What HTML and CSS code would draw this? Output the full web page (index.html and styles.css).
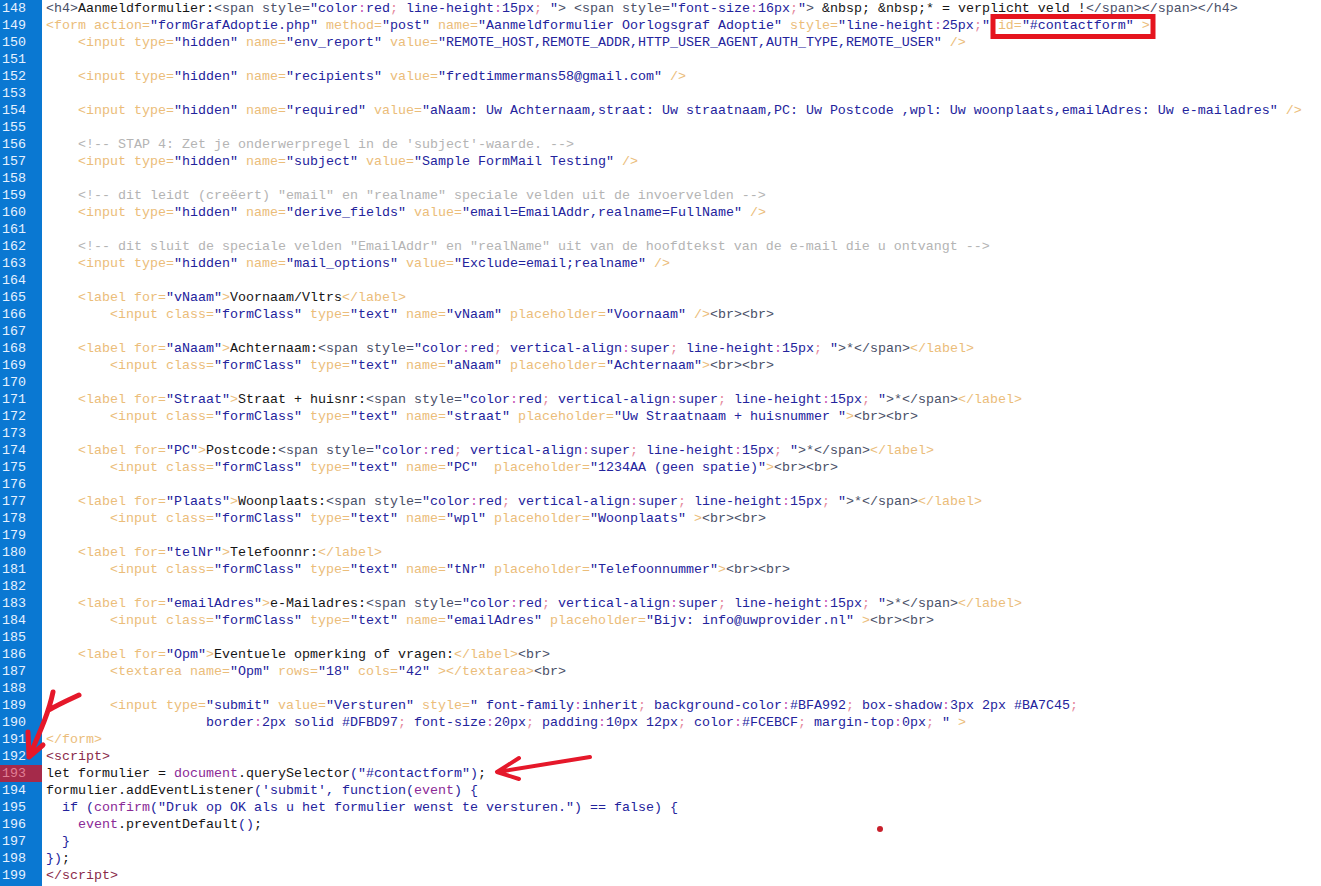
FILE: index.html
```html
<!DOCTYPE html>
<html lang="nl">
<head>
<meta charset="utf-8">
<title>Code editor</title>
<link rel="stylesheet" href="styles.css">
</head>
<body>
<main class="editor">
<div class="gutter">
<div>148</div><div>149</div><div>150</div><div>151</div><div>152</div><div>153</div><div>154</div><div>155</div><div>156</div><div>157</div><div>158</div><div>159</div><div>160</div><div>161</div><div>162</div><div>163</div><div>164</div><div>165</div><div>166</div><div>167</div><div>168</div><div>169</div><div>170</div><div>171</div><div>172</div><div>173</div><div>174</div><div>175</div><div>176</div><div>177</div><div>178</div><div>179</div><div>180</div><div>181</div><div>182</div><div>183</div><div>184</div><div>185</div><div>186</div><div>187</div><div>188</div><div>189</div><div>190</div><div>191</div><div>192</div><div class="breakpoint">193</div><div>194</div><div>195</div><div>196</div><div>197</div><div>198</div><div>199</div>
</div>
<div class="code">
<div class="ln"><span class="g">&lt;h4&gt;</span>Aanmeldformulier:<span class="g">&lt;span style=</span><span class="b">"color<span class="p">:</span>red<span class="s">;</span> line-height<span class="p">:</span>15px<span class="s">;</span> "</span><span class="g">&gt; &lt;span style=</span><span class="b">"font-size<span class="p">:</span>16px<span class="s">;</span>"</span><span class="g">&gt;</span> &amp;nbsp; &amp;nbsp;* = verplicht veld !<span class="g">&lt;/span&gt;&lt;/span&gt;&lt;/h4&gt;</span></div>
<div class="ln"><span class="o">&lt;form action=</span><span class="b">"formGrafAdoptie.php"</span> <span class="o">method=</span><span class="b">"post"</span> <span class="o">name=</span><span class="b">"Aanmeldformulier Oorlogsgraf Adoptie"</span> <span class="o">style=</span><span class="b">"line-height<span class="p">:</span>25px<span class="s">;</span>"</span> <span class="o">id=</span><span class="b">"#contactform"</span> <span class="o">&gt;</span></div>
<div class="ln i1"><span class="o">&lt;input type=</span><span class="b">"hidden"</span> <span class="o">name=</span><span class="b">"env_report"</span> <span class="o">value=</span><span class="b">"REMOTE_HOST,REMOTE_ADDR,HTTP_USER_AGENT,AUTH_TYPE,REMOTE_USER"</span> <span class="o">/&gt;</span></div>
<div class="ln"></div>
<div class="ln i1"><span class="o">&lt;input type=</span><span class="b">"hidden"</span> <span class="o">name=</span><span class="b">"recipients"</span> <span class="o">value=</span><span class="b">"fredtimmermans58@gmail.com"</span> <span class="o">/&gt;</span></div>
<div class="ln"></div>
<div class="ln i1"><span class="o">&lt;input type=</span><span class="b">"hidden"</span> <span class="o">name=</span><span class="b">"required"</span> <span class="o">value=</span><span class="b">"aNaam: Uw Achternaam,straat: Uw straatnaam,PC: Uw Postcode ,wpl: Uw woonplaats,emailAdres: Uw e-mailadres"</span> <span class="o">/&gt;</span></div>
<div class="ln"></div>
<div class="ln i1"><span class="c">&lt;!-- STAP 4: Zet je onderwerpregel in de 'subject'-waarde. --&gt;</span></div>
<div class="ln i1"><span class="o">&lt;input type=</span><span class="b">"hidden"</span> <span class="o">name=</span><span class="b">"subject"</span> <span class="o">value=</span><span class="b">"Sample FormMail Testing"</span> <span class="o">/&gt;</span></div>
<div class="ln"></div>
<div class="ln i1"><span class="c">&lt;!-- dit leidt (creëert) "email" en "realname" speciale velden uit de invoervelden --&gt;</span></div>
<div class="ln i1"><span class="o">&lt;input type=</span><span class="b">"hidden"</span> <span class="o">name=</span><span class="b">"derive_fields"</span> <span class="o">value=</span><span class="b">"email=EmailAddr,realname=FullName"</span> <span class="o">/&gt;</span></div>
<div class="ln"></div>
<div class="ln i1"><span class="c">&lt;!-- dit sluit de speciale velden "EmailAddr" en "realName" uit van de hoofdtekst van de e-mail die u ontvangt --&gt;</span></div>
<div class="ln i1"><span class="o">&lt;input type=</span><span class="b">"hidden"</span> <span class="o">name=</span><span class="b">"mail_options"</span> <span class="o">value=</span><span class="b">"Exclude=email;realname"</span> <span class="o">/&gt;</span></div>
<div class="ln"></div>
<div class="ln i1"><span class="o">&lt;label for=</span><span class="b">"vNaam"</span><span class="o">&gt;</span>Voornaam/Vltrs<span class="o">&lt;/label&gt;</span></div>
<div class="ln i2"><span class="o">&lt;input class=</span><span class="b">"formClass"</span> <span class="o">type=</span><span class="b">"text"</span> <span class="o">name=</span><span class="b">"vNaam"</span> <span class="o">placeholder=</span><span class="b">"Voornaam"</span> <span class="o">/&gt;</span><span class="g">&lt;br&gt;&lt;br&gt;</span></div>
<div class="ln"></div>
<div class="ln i1"><span class="o">&lt;label for=</span><span class="b">"aNaam"</span><span class="o">&gt;</span>Achternaam:<span class="g">&lt;span style=</span><span class="b">"color<span class="p">:</span>red<span class="s">;</span> vertical-align<span class="p">:</span>super<span class="s">;</span> line-height<span class="p">:</span>15px<span class="s">;</span> "</span><span class="g">&gt;*&lt;/span&gt;</span><span class="o">&lt;/label&gt;</span></div>
<div class="ln i2"><span class="o">&lt;input class=</span><span class="b">"formClass"</span> <span class="o">type=</span><span class="b">"text"</span> <span class="o">name=</span><span class="b">"aNaam"</span> <span class="o">placeholder=</span><span class="b">"Achternaam"</span><span class="o">&gt;</span><span class="g">&lt;br&gt;&lt;br&gt;</span></div>
<div class="ln"></div>
<div class="ln i1"><span class="o">&lt;label for=</span><span class="b">"Straat"</span><span class="o">&gt;</span>Straat + huisnr:<span class="g">&lt;span style=</span><span class="b">"color<span class="p">:</span>red<span class="s">;</span> vertical-align<span class="p">:</span>super<span class="s">;</span> line-height<span class="p">:</span>15px<span class="s">;</span> "</span><span class="g">&gt;*&lt;/span&gt;</span><span class="o">&lt;/label&gt;</span></div>
<div class="ln i2"><span class="o">&lt;input class=</span><span class="b">"formClass"</span> <span class="o">type=</span><span class="b">"text"</span> <span class="o">name=</span><span class="b">"straat"</span> <span class="o">placeholder=</span><span class="b">"Uw Straatnaam + huisnummer "</span><span class="o">&gt;</span><span class="g">&lt;br&gt;&lt;br&gt;</span></div>
<div class="ln"></div>
<div class="ln i1"><span class="o">&lt;label for=</span><span class="b">"PC"</span><span class="o">&gt;</span>Postcode:<span class="g">&lt;span style=</span><span class="b">"color<span class="p">:</span>red<span class="s">;</span> vertical-align<span class="p">:</span>super<span class="s">;</span> line-height<span class="p">:</span>15px<span class="s">;</span> "</span><span class="g">&gt;*&lt;/span&gt;</span><span class="o">&lt;/label&gt;</span></div>
<div class="ln i2"><span class="o">&lt;input class=</span><span class="b">"formClass"</span> <span class="o">type=</span><span class="b">"text"</span> <span class="o">name=</span><span class="b">"PC"</span>  <span class="o">placeholder=</span><span class="b">"1234AA (geen spatie)"</span><span class="o">&gt;</span><span class="g">&lt;br&gt;&lt;br&gt;</span></div>
<div class="ln"></div>
<div class="ln i1"><span class="o">&lt;label for=</span><span class="b">"Plaats"</span><span class="o">&gt;</span>Woonplaats:<span class="g">&lt;span style=</span><span class="b">"color<span class="p">:</span>red<span class="s">;</span> vertical-align<span class="p">:</span>super<span class="s">;</span> line-height<span class="p">:</span>15px<span class="s">;</span> "</span><span class="g">&gt;*&lt;/span&gt;</span><span class="o">&lt;/label&gt;</span></div>
<div class="ln i2"><span class="o">&lt;input class=</span><span class="b">"formClass"</span> <span class="o">type=</span><span class="b">"text"</span> <span class="o">name=</span><span class="b">"wpl"</span> <span class="o">placeholder=</span><span class="b">"Woonplaats"</span> <span class="o">&gt;</span><span class="g">&lt;br&gt;&lt;br&gt;</span></div>
<div class="ln"></div>
<div class="ln i1"><span class="o">&lt;label for=</span><span class="b">"telNr"</span><span class="o">&gt;</span>Telefoonnr:<span class="o">&lt;/label&gt;</span></div>
<div class="ln i2"><span class="o">&lt;input class=</span><span class="b">"formClass"</span> <span class="o">type=</span><span class="b">"text"</span> <span class="o">name=</span><span class="b">"tNr"</span> <span class="o">placeholder=</span><span class="b">"Telefoonnummer"</span><span class="o">&gt;</span><span class="g">&lt;br&gt;&lt;br&gt;</span></div>
<div class="ln"></div>
<div class="ln i1"><span class="o">&lt;label for=</span><span class="b">"emailAdres"</span><span class="o">&gt;</span>e-Mailadres:<span class="g">&lt;span style=</span><span class="b">"color<span class="p">:</span>red<span class="s">;</span> vertical-align<span class="p">:</span>super<span class="s">;</span> line-height<span class="p">:</span>15px<span class="s">;</span> "</span><span class="g">&gt;*&lt;/span&gt;</span><span class="o">&lt;/label&gt;</span></div>
<div class="ln i2"><span class="o">&lt;input class=</span><span class="b">"formClass"</span> <span class="o">type=</span><span class="b">"text"</span> <span class="o">name=</span><span class="b">"emailAdres"</span> <span class="o">placeholder=</span><span class="b">"Bijv: info@uwprovider.nl"</span> <span class="o">&gt;</span><span class="g">&lt;br&gt;&lt;br&gt;</span></div>
<div class="ln"></div>
<div class="ln i1"><span class="o">&lt;label for=</span><span class="b">"Opm"</span><span class="o">&gt;</span>Eventuele opmerking of vragen:<span class="o">&lt;/label&gt;</span><span class="g">&lt;br&gt;</span></div>
<div class="ln i2"><span class="o">&lt;textarea name=</span><span class="b">"Opm"</span> <span class="o">rows=</span><span class="b">"18"</span> <span class="o">cols=</span><span class="b">"42"</span> <span class="o">&gt;&lt;/textarea&gt;</span><span class="g">&lt;br&gt;</span></div>
<div class="ln"></div>
<div class="ln i2"><span class="o">&lt;input type=</span><span class="b">"submit"</span> <span class="o">value=</span><span class="b">"Versturen"</span> <span class="o">style=</span><span class="b">" font-family<span class="p">:</span>inherit<span class="s">;</span> background-color<span class="p">:</span>#BFA992<span class="s">;</span> box-shadow<span class="p">:</span>3px 2px #BA7C45<span class="s">;</span></span></div>
<div class="ln i5"><span class="b">border<span class="p">:</span>2px solid #DFBD97<span class="s">;</span> font-size<span class="p">:</span>20px<span class="s">;</span> padding<span class="p">:</span>10px 12px<span class="s">;</span> color<span class="p">:</span>#FCEBCF<span class="s">;</span> margin-top<span class="p">:</span>0px<span class="s">;</span> "</span> <span class="o">&gt;</span></div>
<div class="ln"><span class="o">&lt;/form&gt;</span></div>
<div class="ln"><span class="m">&lt;script&gt;</span></div>
<div class="ln">let formulier = <span class="u">document</span>.querySelector<span class="b">("#contactform")</span>;</div>
<div class="ln">formulier.addEventListener<span class="b">('submit', function(</span><span class="u">event</span><span class="b">) {</span></div>
<div class="ln j1"><span class="b">if (</span><span class="u">confirm</span><span class="b">("Druk op OK als u het formulier wenst te versturen.") == false) {</span></div>
<div class="ln j2"><span class="u">event</span>.preventDefault<span class="b">()</span>;</div>
<div class="ln j1"><span class="b">}</span></div>
<div class="ln"><span class="b">})</span>;</div>
<div class="ln"><span class="m">&lt;/script&gt;</span></div>
</div>
<svg class="marks" width="1321" height="886" viewBox="0 0 1321 886" aria-hidden="true">
<rect class="box" x="993" y="16.5" width="160" height="20"/>
<path class="ink thick" d="M53 692 C49 712 40 732 29 757 M79 695 C66 701 57 705 49 710 M28 732 L29 757 L43 745"/>
<path class="ink" d="M590 757 L497 772 M519 758 L497 772 L519 779"/>
<circle class="dot" cx="880" cy="829" r="3"/>
</svg>
</main>
</body>
</html>
```
FILE: styles.css
```css
html, body {
  margin: 0;
  padding: 0;
  background: #fff;
}
.editor {
  position: relative;
  display: flex;
  width: 1321px;
  height: 886px;
  overflow: hidden;
  font-family: "Liberation Mono", "Courier New", monospace;
  font-size: 13.33px;
  line-height: 17px;
}
.gutter {
  flex: 0 0 42px;
  background: #0a78d2;
  color: #e6f1ff;
}
.gutter div {
  height: 17px;
  padding-left: 2px;
}
.gutter .breakpoint {
  background: #a52a4a;
  color: #e07f95;
}
.code {
  flex: 1;
  padding-left: 4px;
  color: #151515;
}
.ln {
  height: 17px;
  white-space: pre;
}
.i1 { padding-left: 32px; }
.i2 { padding-left: 64px; }
.i5 { padding-left: 160px; }
.j1 { padding-left: 16px; }
.j2 { padding-left: 32px; }
.o { color: #ebbd7a; }
.g { color: #4a5068; }
.b { color: #23239c; }
.p { color: #c855b5; }
.s { color: #e58aa0; }
.c { color: #b4b4b4; }
.u { color: #8a2a96; }
.m { color: #8a2a4a; }
.marks {
  position: absolute;
  left: 0;
  top: 0;
}
.box {
  fill: none;
  stroke: #e5141e;
  stroke-width: 5;
}
.ink {
  fill: none;
  stroke: #e5182a;
  stroke-width: 4;
  stroke-linecap: round;
  stroke-linejoin: round;
}
.thick { stroke-width: 5; }
.dot { fill: #c8202c; }
```
